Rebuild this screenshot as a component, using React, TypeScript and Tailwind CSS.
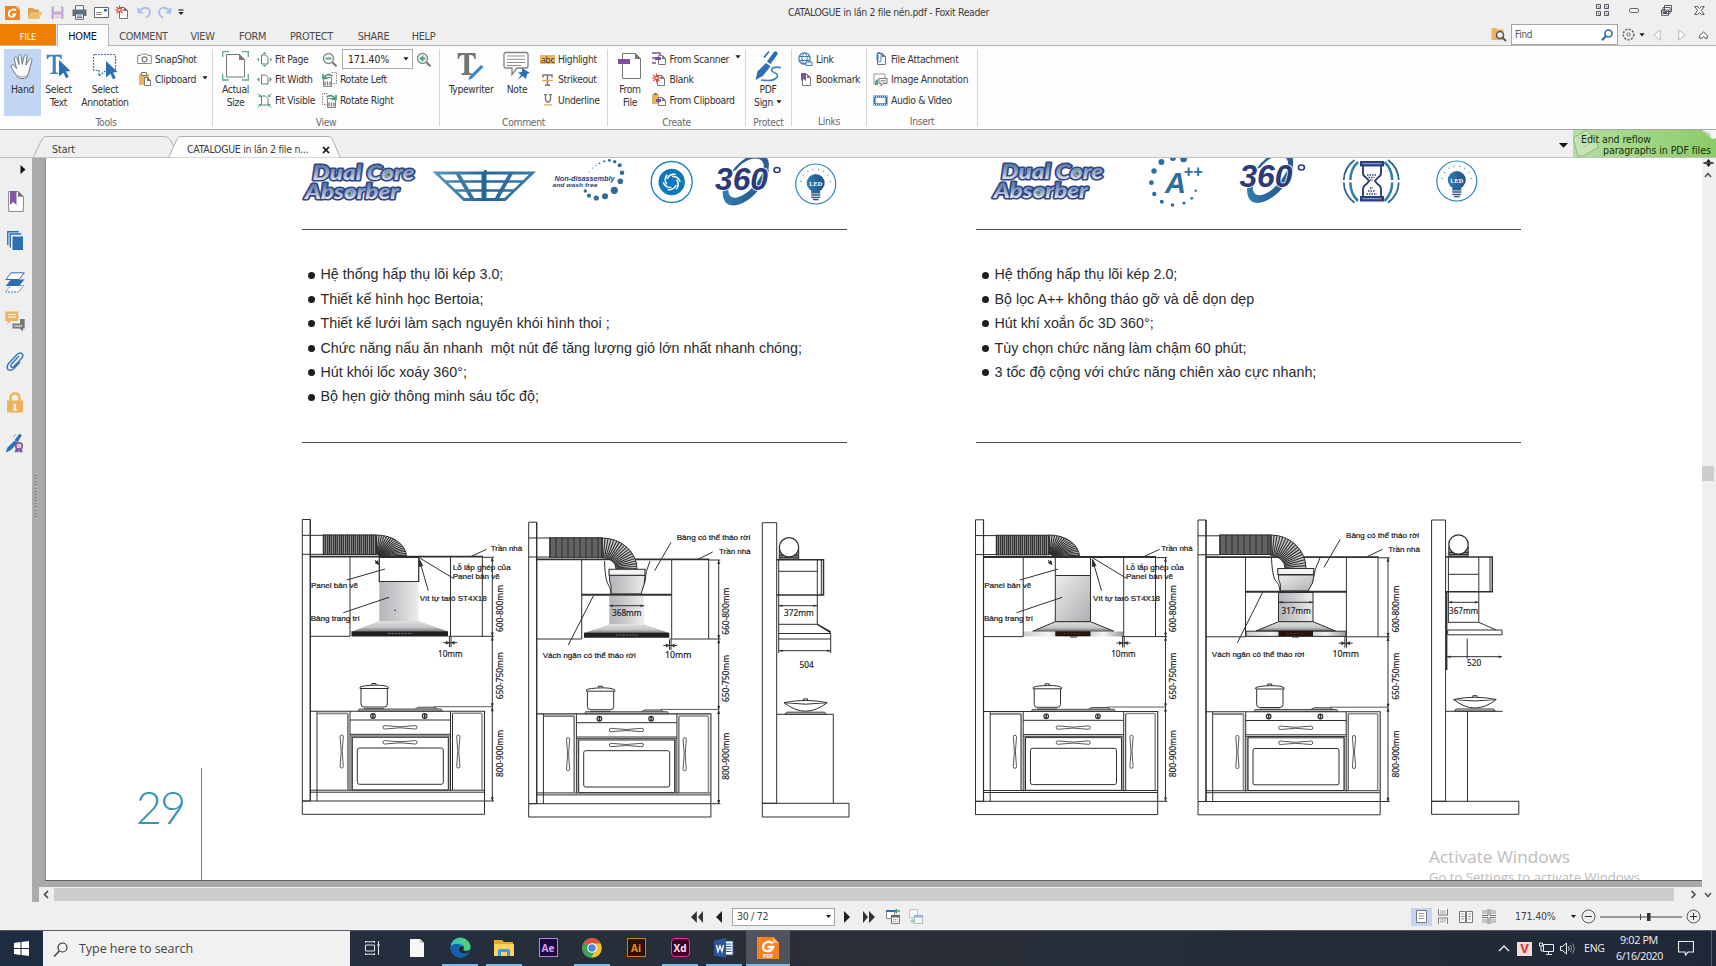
import React from 'react';

const INK = '#2f2f31';
const UI = "font-['DejaVu_Sans_Condensed','Noto_Sans',sans-serif]";

/* ---------- small shared pieces ---------- */

function Caret({ className = '' }: { className?: string }) {
  return (
    <svg width="6" height="4" viewBox="0 0 7 4" className={`shrink-0 ${className}`}>
      <path d="M0.5 0h6L3.5 3.8z" fill="#1a1a1a" />
    </svg>
  );
}

function Svg({ w, h, children, className = '' }: { w: number; h: number; children: React.ReactNode; className?: string }) {
  return (
    <svg width={w} height={h} viewBox={`0 0 ${w} ${h}`} fill="none" className={`shrink-0 ${className}`}>
      {children}
    </svg>
  );
}

const Sheet = ({ x = 0, y = 0, w = 9, h = 12 }: { x?: number; y?: number; w?: number; h?: number }) => (
  <g transform={`translate(${x} ${y})`}>
    <path d={`M.5 .5H${w - 3.5}L${w - 0.5} 3.5V${h - 0.5}H.5z`} fill="#fff" stroke="#777" />
    <path d={`M${w - 4} 0v4h4z`} fill="#777" />
  </g>
);

const Burst = ({ x, y }: { x: number; y: number }) => (
  <g transform={`translate(${x} ${y})`} stroke="#d4452e" strokeWidth="1.1">
    <path d="M0-4.5V4.5M-4.5 0H4.5M-3-3L3 3M-3 3L3-3" />
    <circle r="1.1" fill="#fff" stroke="none" />
  </g>
);

/* ---------- title bar ---------- */

function TitleBar() {
  return (
    <div className="flex h-6 shrink-0 items-center bg-[#efefef] pt-px">
      <div className="flex w-[190px] items-center pl-[5px]">
        <Svg w={15} h={16}>
          <path d="M0 1h11l4 4v10H0z" fill="#f5821f" />
          <path d="M11 1h4v4z" fill="#fbc9a0" />
          <path d="M11.3 5.2C8.500 3.600 3.800 5 3.700 9c0 3.200 4.800 4.200 6.400.3L7.300 9.500" stroke="#fff" strokeWidth="1.800" />
        </Svg>
        <Svg w={16} h={14} className="ml-[7px]">
          <path d="M1 2h5l1.500 1.500H12V6H4L1 12z" fill="#d9a24e" />
          <path d="M4 6h11.500L12 13H1z" fill="#f0bd6d" />
        </Svg>
        <Svg w={13} h={14} className="ml-[8px]">
          <path d="M.5.500h12v12.500H.5z" fill="#c7a9d3" />
          <path d="M3 .5h7v5H3z" fill="#efefef" />
          <path d="M3 8.500h7V13H3z" fill="#efefef" />
          <path d="M4 10h5M4 11.500h5" stroke="#c7a9d3" strokeWidth=".7" />
        </Svg>
        <Svg w={15} h={15} className="ml-[8px]">
          <path d="M3.500 5V.7h8V5" stroke="#666" fill="#fff" />
          <path d="M.5 4.500h14V11H.5z" fill="#6d6d6d" />
          <path d="M3 6.500h9v1.500H3z" fill="#3b78b8" />
          <path d="M3.500 9h8v5.300h-8z" fill="#fff" stroke="#666" />
          <path d="M5 11h5M5 12.500h5" stroke="#3b78b8" />
        </Svg>
        <Svg w={15} h={11} className="ml-[7px]">
          <path d="M.5.500h14v10H.5z" fill="#fff" stroke="#666" />
          <path d="M2 5.500h6M2 7.500h6" stroke="#888" />
          <path d="M10 2h3v2.500h-3z" fill="#2f6fb5" />
        </Svg>
        <Svg w={14} h={15} className="ml-[6px]">
          <Sheet x={4} y={2} w={9} h={12} />
          <Burst x={4.5} y={5} />
        </Svg>
        <Svg w={15} h={14} className="ml-[8px]">
          <path d="M1 6.500h5M1.500 2v4.500M2 6.500C4 1.500 9.500.500 12 3.500c3 4-1 7-3 8.500" stroke="#a9c3e2" strokeWidth="1.900" />
        </Svg>
        <Svg w={15} h={14} className="ml-[5px]">
          <path d="M14 6.500H9M13.500 2v4.500M13 6.500C11 1.500 5.500.500 3 3.500c-3 4 1 7 3 8.500" stroke="#a9c3e2" strokeWidth="1.900" />
        </Svg>
        <Svg w={6} h={7} className="ml-[6px]">
          <path d="M.5 1h5" stroke="#222" strokeWidth="1.200" />
          <path d="M.3 3h5.400L3 6z" fill="#222" />
        </Svg>
      </div>
      <div className={`flex-1 pl-[598px] text-[10.400px] tracking-[-0.340px] text-[#3c3c3c] ${UI}`}>CATALOGUE in lần 2 file nén.pdf - Foxit Reader</div>
      <div className="flex items-center pb-[5px] pr-[11px]">
        <Svg w={13} h={13}>
          {[0.5, 8.5].map((x) => [0.5, 7.500].map((y) => <path key={`${x}${y}`} d={`M${x} ${y}h4v4h-4zM${x + 1.500} ${y + 1.500}l1.500 1.500`} stroke="#555563" />))}
        </Svg>
        <Svg w={10} h={5} className="ml-[20px]"><rect x=".6" y=".6" width="8.800" height="3.800" rx="1" fill="#fff" stroke="#555563" /></Svg>
        <Svg w={11} h={11} className="ml-[22px]">
          <path d="M3.500.500h7v6h-7zM2 2.500h7v6H2zM.5 5h7v5.300h-7z" fill="#fff" stroke="#555563" />
          <path d="M2 7.500h4" stroke="#555563" />
        </Svg>
        <Svg w={11} h={9} className="ml-[22px]">
          <path d="M.7.600h3l1.800 2 1.800-2h3L7.300 4.500l3 3.900h-3L5.500 6.400 3.700 8.400h-3l3-3.900z" fill="#fff" stroke="#555563" />
        </Svg>
      </div>
    </div>
  );
}

/* ---------- ribbon tabs ---------- */

const MENU: [string, string][] = [
  ['COMMENT', 'w-[69px]'],
  ['VIEW', 'w-[49px]'],
  ['FORM', 'w-[51px]'],
  ['PROTECT', 'w-[67px]'],
  ['SHARE', 'w-[57px]'],
  ['HELP', 'w-[43px]'],
];

function MenuRow() {
  return (
    <div className={`relative flex h-[22px] shrink-0 items-stretch border-b border-[#b8b8b8] bg-[#efefef] text-[10.800px] leading-[25px] tracking-[-0.280px] text-[#4a4a4a] ${UI}`}>
      <div className="w-14 bg-[#f08000] text-center text-[9.500px] text-white">FILE</div>
      <div className="-mb-px ml-px w-[52px] border-x border-t border-[#b8b8b8] bg-[#fdfdfd] text-center leading-[23px] text-[#111]"><span className="relative -left-[0.500px]">HOME</span></div>
      {MENU.map(([t, w]) => (
        <div key={t} className={`text-center ${w}`}>{t}</div>
      ))}
      <div className="ml-auto flex items-center pr-[8px]">
        <Svg w={16} h={15} className="mr-[4px]">
          <path d="M.5 1h5l1 1.500h6V13H.5z" fill="#ebb45f" />
          <circle cx="9" cy="8" r="3.500" stroke="#555" strokeWidth="1.500" fill="#efefef" />
          <path d="M11.500 10.500l3.500 3.500" stroke="#555" strokeWidth="1.800" />
        </Svg>
        <div className="flex h-[21px] w-[107px] items-center justify-between border border-[#a5a5a5] bg-white pl-[3px] pr-[4px] text-[10px] text-[#555]">
          <span>Find</span>
          <Svg w={12} h={12}>
            <circle cx="7.500" cy="4.500" r="3.500" stroke="#2f6fb5" strokeWidth="1.700" />
            <path d="M5 7l-4 4.300" stroke="#2f6fb5" strokeWidth="2.200" />
          </Svg>
        </div>
        <Svg w={13} h={13} className="ml-[4px]">
          <circle cx="6.500" cy="6.500" r="5.300" stroke="#666" strokeWidth="1.500" strokeDasharray="2.200 1.300" />
          <circle cx="6.500" cy="6.500" r="1.600" stroke="#666" />
        </Svg>
        <Caret className="ml-[4px]" />
        <Svg w={8} h={12} className="ml-[8px]"><path d="M7.200 1v10L.8 6z" fill="#fff" stroke="#b9b9b9" /></Svg>
        <Svg w={8} h={12} className="ml-[17px]"><path d="M.8 1v10l6.400-5z" fill="#fff" stroke="#b9b9b9" /></Svg>
        <Svg w={9} h={8} className="ml-[13px]"><path d="M.7 4.500l3.800-3.500 3.800 3.500v2.700H6L4.500 5.500 3 7.200H.7z" fill="#fff" stroke="#555563" /></Svg>
      </div>
    </div>
  );
}

/* ---------- ribbon ---------- */

function Group({ label, w, children }: { label: string; w: string; children: React.ReactNode }) {
  return (
    <div className={`flex h-full shrink-0 py-[3px] ${w}`}>
      <div className="flex flex-1 flex-col">
        <div className="flex flex-1">{children}</div>
        <div className="h-[11px] text-center leading-[12px] text-[#6a6a6a]">{label}</div>
      </div>
      <div className="w-px bg-[#d4d4d4]" />
    </div>
  );
}

function Big({ icon, lines, w, active = false }: { icon: React.ReactNode; lines: React.ReactNode[]; w: string; active?: boolean }) {
  return (
    <div className={`flex h-[67px] shrink-0 flex-col items-center ${w} ${active ? 'bg-[#c2d5f2]' : ''}`}>
      <div className="flex h-[34px] items-center justify-center">{icon}</div>
      {lines.map((l, i) => (
        <div key={i} className="flex h-[12.400px] items-center whitespace-nowrap leading-3">{l}</div>
      ))}
    </div>
  );
}

function Row({ icon, text, caret = false, gap = 'gap-[3px]' }: { icon: React.ReactNode; text: string; caret?: boolean; gap?: string }) {
  return (
    <div className={`flex h-[20.600px] items-center whitespace-nowrap ${gap}`}>
      <span className="flex w-[15px] shrink-0 justify-center">{icon}</span>
      <span>{text}</span>
      {caret && <Caret className="mb-1 ml-[3px]" />}
    </div>
  );
}

const Pointer = ({ x, y }: { x: number; y: number }) => (
  <path transform={`translate(${x} ${y})`} d="M0 0l11.500 11-4.500.5 2.800 5.500-2.800 1.300-2.600-5.600L0 16.500z" fill="#2c6db3" />
);

const HandIcon = () => (
  <Svg w={25} h={27}>
    <path d="M7.500 24C5 20 2.500 17 1.300 14c-.8-2.300 1.500-3 2.700-1.500l2.500 3L4.300 6C4 3.500 6.300 3 7 5.200l2 6.300-.5-8C8.500 1 11 1 11.300 3.300l.9 8L14.300 3c.6-2 2.900-1.500 2.600.7l-1 8.300 3.500-5.500c1.200-1.700 3-.8 2.400 1-1 3.500-1.700 7.500-3 11.500-.6 2.300-1.500 3.700-1.800 5.500-3 1.800-7 1.500-9.500-.5z" fill="#fafafa" stroke="#6f7680" />
    <path d="M8 22.500c3 2 6.500 2 9 .3" stroke="#9a9fa8" />
  </Svg>
);
const SelTextIcon = () => (
  <Svg w={25} h={27}>
    <path d="M.7 6V1.800h15V6h-1.200c-.3-1.700-1-2.500-3-2.500H9.800v14.800c0 1.200.6 1.500 2.500 1.600V21H4.200v-1.100c2 0 2.500-.4 2.500-1.600V3.500H5C3 3.500 2.300 4.300 2 6z" fill="#4281bb" />
    <Pointer x={13} y={7} />
  </Svg>
);
const SelAnnIcon = () => (
  <Svg w={26} h={27}>
    <path d="M3 1.500h19q1.500 0 1.500 1.500v13q0 1-1.500 1.500h-8l-7 5.500v-5.500H3q-1.500 0-1.500-1.500V3q0-1.500 1.500-1.500z" stroke="#2c6db3" strokeDasharray="1.800 1.200" strokeWidth="1.200" />
    <Pointer x={14} y={8} />
  </Svg>
);
const ActualIcon = () => (
  <Svg w={27} h={30}>
    <path d="M.7 6V.7H7M20 .7h6.300V6M.7 23v6H7M20 29h6.300v-6" stroke="#5fae8f" strokeWidth="1.300" />
    <path d="M4.500 3.500h13l5 5V26h-18z" fill="#fff" stroke="#777" />
    <path d="M17 3v6h6z" fill="#777" />
  </Svg>
);
const TypeIcon = () => (
  <Svg w={28} h={30}>
    <path d="M.7 8V2h18v6h-1.300c-.4-2.600-1.500-4-4-4h-1.300v16.300c0 1.600.7 2 2.800 2.200V24H4.400v-1.500c2.200-.2 2.900-.6 2.900-2.200V4H6C3.500 4 2.400 5.400 2 8z" fill="#757575" />
    <path d="M24 14l2.500 2L15 27.500l-3.500 1.500 1-3.500z" fill="#3f83c6" />
  </Svg>
);
const NoteIcon = () => (
  <Svg w={28} h={30}>
    <path d="M3 1.500h20q2 0 2 2V15q0 2-2 2H14L9 23.500V17H3q-2 0-2-2V3.500q0-2 2-2z" fill="#fff" stroke="#808080" strokeWidth="1.300" />
    <path d="M4 5h18M4 8.300h18M4 11.500h18M4 14.500h14" stroke="#8b8b8b" />
    <path d="M19 17l8 5-3 1-1 5-3.500-3-5 4 3.500-5-3-2.500 4-.5z" fill="#2c6db3" />
  </Svg>
);
const FromFileIcon = () => (
  <Svg w={24} h={28}>
    <path d="M4.500 1.500h13l5 5v20h-18z" fill="#fff" stroke="#777" />
    <path d="M17 1v6h6z" fill="#777" />
    <path d="M0 7h12v5H0z" fill="#7f4f9e" />
  </Svg>
);
const SignIcon = () => (
  <Svg w={27} h={31}>
    <path d="M12 10.500L19 1q1.500-1.500 3 0 1.200 1.300.2 2.700L15.500 13z" fill="#2c6db3" />
    <path d="M11 12l4.500 3.200-7.500 9.500L.5 29l2-8.500z" fill="#2c6db3" />
    <path d="M9 6.500l5-6" stroke="#2c6db3" strokeWidth="1.700" />
    <path d="M26 17c-5-2-11 0-9 3 2 2.500 7 2 5 6-2 3.500-9 4-16 3" stroke="#3f83c6" strokeWidth="1.600" />
  </Svg>
);
const FitIcon = ({ kind }: { kind: number }) => (
  <Svg w={15} h={15}>
    <path d="M4.500 3h4l2.500 2.500V12H4.500z" fill="#fff" stroke="#777" />
    {kind === 0 && <path d="M7.500 0l2 2h-4zM7.500 15l2-2h-4zM0 7.500l2-2v4zM15 7.500l-2-2v4z" fill="#4aa986" />}
    {kind === 1 && <path d="M0 7.500l2.500-2.500v5zM15 7.500L12.500 5v5z" fill="#4aa986" />}
    {kind === 2 && <path d="M.5.500l3 3m0-2v2h-2M14.500.500l-3 3m0-2v2h2M.5 14.500l3-3m0 2v-2h-2M14.500 14.500l-3-3m0 2v-2h2" stroke="#4aa986" />}
  </Svg>
);
const Mag = ({ plus = false, className = '' }: { plus?: boolean; className?: string }) => (
  <Svg w={16} h={15} className={className}>
    <circle cx="6.500" cy="6.500" r="5" fill="#fff" stroke="#888" strokeWidth="1.300" />
    <path d="M10.500 10.500l4 3.800" stroke="#777" strokeWidth="2" />
    <path d={plus ? 'M3.500 6.500h6M6.500 3.500v6' : 'M3.500 6.500h6'} stroke="#3f9f7c" strokeWidth="1.800" />
  </Svg>
);
const RotIcon = ({ right = false }: { right?: boolean }) => (
  <Svg w={15} h={15}>
    <g transform={right ? 'translate(15 0) scale(-1 1)' : undefined}>
      <path d="M9.500.500h5v11h-5" stroke="#888" strokeDasharray="1.500 1" />
      <path d="M1.500 5.500h8v9h-8z" fill="#fff" stroke="#888" />
      <path d="M3 9.500v4M5.500 9.500v4M8 9.500v4" stroke="#777" strokeWidth="1.300" />
      <path d="M1 2v4.500h4.500M2 6C3.500 2.500 7 1.500 10.500 4" stroke="#3f9f7c" strokeWidth="1.700" />
    </g>
  </Svg>
);

function Ribbon() {
  return (
    <div className={`flex h-[84px] shrink-0 border-b border-[#a6a6a6] bg-[#fdfdfd] text-[10.300px] tracking-[-0.350px] text-[#333] ${UI}`}>
      <Group label="Tools" w="w-[213px]">
        <Big w="ml-[4px] w-[37px]" active icon={<HandIcon />} lines={['Hand']} />
        <Big w="w-[35px]" icon={<SelTextIcon />} lines={['Select', 'Text']} />
        <Big w="w-[58px]" icon={<SelAnnIcon />} lines={['Select', 'Annotation']} />
        <div className="ml-[3px]">
          <Row icon={<Svg w={15} h={12}><path d="M.7 2.500h3l1-1.500h5l1 1.500h3.600v8H.7z" fill="#fff" stroke="#888" /><circle cx="7.500" cy="6.300" r="2.500" stroke="#777" strokeWidth="1.200" /></Svg>} text="SnapShot" />
          <Row caret icon={<Svg w={14} h={15}><path d="M1 2h10v11H1z" fill="#e9b25c" /><path d="M3.500.500h5v3h-5z" fill="#fff" stroke="#777" /><Sheet x={6} y={5} w={7} h={9} /></Svg>} text="Clipboard" />
        </div>
      </Group>
      <Group label="View" w="w-[227px]">
        <Big w="ml-px w-[43px]" icon={<ActualIcon />} lines={['Actual', 'Size']} />
        <div className="w-[65px]">
          <Row icon={<FitIcon kind={0} />} text="Fit Page" />
          <Row icon={<FitIcon kind={1} />} text="Fit Width" />
          <Row icon={<FitIcon kind={2} />} text="Fit Visible" />
        </div>
        <div>
          <div className="flex h-[20.600px] items-center">
            <Mag />
            <div className="ml-[4px] flex h-5 w-[71px] items-center justify-between border border-[#ababab] bg-white pl-[5px] pr-[3px] text-[#222]">
              <span className="tracking-[0px]">171.40%</span>
              <Caret />
            </div>
            <Mag plus className="ml-[3px]" />
          </div>
          <Row icon={<RotIcon />} text="Rotate Left" />
          <Row icon={<RotIcon right />} text="Rotate Right" />
        </div>
      </Group>
      <Group label="Comment" w="w-[168px]">
        <Big w="ml-[7px] w-[48px]" icon={<TypeIcon />} lines={['Typewriter']} />
        <Big w="w-[44px]" icon={<NoteIcon />} lines={['Note']} />
        <div className="ml-px">
          <Row icon={<span className="bg-[#efb55f] px-px font-sans text-[9px] leading-[9px] tracking-[-0.500px] text-[#444]">abc</span>} text="Highlight" />
          <Row icon={<Svg w={11} h={12}><path d="M1 3.500V1h9v2.500M5.500 1v10M3 11.300h5" stroke="#777" strokeWidth="1.500" /><path d="M0 6.500h11" stroke="#e9a44b" strokeWidth="1.500" /></Svg>} text="Strikeout" />
          <Row icon={<Svg w={10} h={12}><path d="M2.500 0v5q0 3 2.500 3t2.500-3V0M1 .5h3M6 .5h3" stroke="#777" strokeWidth="1.300" /><path d="M1 10.800h8" stroke="#e9a44b" strokeWidth="1.200" /></Svg>} text="Underline" />
        </div>
      </Group>
      <Group label="Create" w="w-[138px]">
        <Big w="ml-px w-[42px]" icon={<FromFileIcon />} lines={['From', 'File']} />
        <div className="ml-[0.500px]">
          <Row caret icon={<Svg w={15} h={14}><path d="M0 1h8v3M0 6h4M0 11h4" stroke="#7f4f9e" strokeWidth="1.400" /><Sheet x={6} y={3} w={8} h={10} /><path d="M3 5h6v3H3z" fill="#7f4f9e" /></Svg>} text="From Scanner" />
          <Row icon={<Svg w={15} h={14}><Sheet x={5} y={2} w={8} h={11} /><Burst x={4.500} y={5} /></Svg>} text="Blank" />
          <Row icon={<Svg w={15} h={14}><path d="M0 1h7v10H0z" fill="#e9b25c" /><path d="M2 0h3v2H2z" fill="#777" /><Sheet x={6} y={4} w={8} h={9} /><path d="M4 6h5v3H4z" fill="#7f4f9e" /></Svg>} text="From Clipboard" />
        </div>
      </Group>
      <Group label="Protect" w="w-[46px]">
        <Big w="w-[44px]" icon={<SignIcon />} lines={['PDF', <span key="s" className="flex items-center gap-[3px]">Sign <Caret /></span>]} />
      </Group>
      <Group label="Links" w="w-[75px]">
        <div className="ml-[6px]">
          <Row icon={<Svg w={15} h={14}><circle cx="6.500" cy="6.500" r="5.700" stroke="#3b78b8" strokeWidth="1.200" /><path d="M6.500 1c-3.500 3-3.500 8 0 11M6.500 1c3.500 3 3.500 8 0 11M1 4.500h11M1 8.500h11" stroke="#3b78b8" /><path d="M8 10h6v3.500H8z" fill="#fff" stroke="#3b78b8" /></Svg>} text="Link" />
          <Row icon={<Svg w={12} h={14}><Sheet x={2} y={1} w={9} h={12} /><path d="M1 0h5v8L3.500 6 1 8z" fill="#7f4f9e" /></Svg>} text="Bookmark" />
        </div>
      </Group>
      <Group label="Insert" w="w-[111px]">
        <div className="ml-[6px]">
          <Row icon={<Svg w={12} h={14}><Sheet x={2} y={1} w={9} h={12} /><path d="M3 3v5.500q0 1.500 1.500 1.500T6 8.500V2Q6 .5 4 .5T2 2v6" stroke="#3b78b8" /></Svg>} text="File Attachment" />
          <Row icon={<Svg w={15} h={14}><path d="M1 12V1h11v4" stroke="#999" /><path d="M2 8l3-2v6H2z" fill="#4aa986" /><path d="M6 5.500h8v5h-4l-2 2.500v-2.500H6z" fill="#fff" stroke="#777" /><path d="M7.500 7.500h5M7.500 9h5" stroke="#888" strokeWidth=".8" /></Svg>} text="Image Annotation" />
          <Row icon={<Svg w={15} h={11}><path d="M.5.500h14v10H.5z" fill="#2c6db3" /><path d="M2.500 2.700h10v5.600h-10z" fill="#fff" /><path d="M1 1.600h13M1 9.500h13" stroke="#fff" strokeWidth=".8" strokeDasharray="1 1" /></Svg>} text="Audio & Video" />
        </div>
      </Group>
    </div>
  );
}

/* ---------- document tabs ---------- */

function DocTabs() {
  return (
    <div className={`relative flex h-[28px] shrink-0 items-stretch border-b border-[#c2c2c2] bg-[#efefef] text-[10.500px] tracking-[-0.300px] text-[#3c3c3c] ${UI}`}>
      <svg width="345" height="28" viewBox="0 130 345 28" className="absolute left-0 top-0">
        <path d="M33 158L42 139Q43.500 136.500 46 136.500H164Q168 136.500 170 139.500L174 147" fill="none" stroke="#b0b0b0" />
        <path d="M168.500 158L177 139Q178.500 136.500 181 136.500H328Q331 136.500 332 138.500L340.500 158z" fill="#fdfdfd" stroke="#b0b0b0" />
      </svg>
      <div className="relative w-[187px] pl-[52px] pt-[12px] leading-[15px] tracking-[0px]">Start</div>
      <div className="relative w-[135px] whitespace-nowrap pt-[12px] leading-[15px]">CATALOGUE in lần 2 file n...</div>
      <svg width="8" height="8" viewBox="0 0 8 8" className="relative mt-[16px]"><path d="M1 1l6 6M7 1L1 7" stroke="#111" strokeWidth="1.700" /></svg>
      <div className="ml-auto flex">
        <svg width="9" height="5" viewBox="0 0 9 5" className="mr-[5px] mt-[13px]"><path d="M0 0h9L4.500 4.800z" fill="#111" /></svg>
        <div className="relative w-[143px] overflow-hidden bg-gradient-to-r from-[#b5dfa0] to-[#8bcb68] text-[10.500px] leading-[11px] tracking-[-0.070px] text-[#16300f]">
          <svg width="143" height="27" viewBox="0 0 143 27" className="absolute inset-0">
            <path d="M0 8L14 0l12 17-16 9H5z" fill="#c6e3b4" stroke="#8fb87a" />
            <path d="M5 9l9-5M8 13l9-5M10 17l9-5" stroke="#a9cf92" />
            <path d="M129 0h14v8l-4 1z" fill="#f4f7f2" />
            <path d="M129 0l10 9-2-6z" fill="#c8d3c2" />
          </svg>
          <div className="relative pl-[8px] pt-[4px]">Edit and reflow</div>
          <div className="relative whitespace-nowrap pl-[30px]">paragraphs in PDF files</div>
        </div>
      </div>
    </div>
  );
}

/* ---------- left navigation ---------- */

function SideBar() {
  return (
    <div className="flex w-8 shrink-0 flex-col items-center bg-[#efefef] pr-[2px]">
      <Svg w={6} h={9} className="ml-[15px] mt-[7px]"><path d="M.5 0l5 4.500-5 4.500z" fill="#111" /></Svg>
      <Svg w={16} h={21} className="ml-[1px] mt-[17px]">
        <path d="M.6.600h10l4.800 4.800v15H.6z" fill="#fff" stroke="#888" />
        <path d="M10 .3v5.400h5.500z" fill="#777" />
        <path d="M2 0h6.500v14L5.200 11 2 14z" fill="#8558a5" />
      </Svg>
      <Svg w={17} h={20} className="ml-[1px] mt-[19px]">
        <path d="M.8 14V.800h11M3.300 16.500V3h11" stroke="#2c6db3" strokeWidth="1.400" />
        <path d="M5.500 5.500H16V19H5.500z" fill="#2c6db3" />
      </Svg>
      <Svg w={20} h={21} className="mt-[21px]">
        <path d="M6 13.500h13l-5.500 6.500H.7z" fill="#fff" stroke="#3b78b8" strokeDasharray="2 1" />
        <path d="M6 7.500h13.500L14 14H.7z" fill="#2c6db3" />
        <path d="M6 .8h13.300L14 7.500H.9z" fill="#fff" stroke="#2c6db3" />
      </Svg>
      <Svg w={20} h={21} className="mt-[18px]">
        <path d="M.3.500h13v9.500H6L2.500 13v-3H.3z" fill="#ebb45f" />
        <path d="M3 3.500h8M3 6h8" stroke="#fff" />
        <path d="M15 8h4.700v9.500H18V20.500l-3.500-3H7.500v-5H15z" fill="#777" />
        <path d="M9 15h8" stroke="#fff" />
      </Svg>
      <Svg w={18} h={20} className="mt-[20px]">
        <path d="M13 4L6 11.500q-2 2.500-.5 3.500 1.500.8 3-1L15 7q3-3.500 1-5.300T11 2.500L3 11q-3 4-1 6.500 2.500 2 6-1l6-6.500" stroke="#3b78b8" strokeWidth="1.500" />
      </Svg>
      <Svg w={16} h={21} className="mt-[20px]">
        <path d="M3.500 9V6q0-4.500 4.500-4.500T12.500 6v3" stroke="#ebb45f" strokeWidth="2.500" />
        <path d="M0 8.500h16V20.500H0z" fill="#ebb45f" />
        <path d="M8 12v6M6.300 13H8M6.300 17.700h3.400" stroke="#fff" strokeWidth="1.600" />
      </Svg>
      <Svg w={18} h={21} className="mt-[19px]">
        <path d="M9 8l4.500-6 2 1.300L11.500 10zM8.500 9l3 2L4.500 18 0 20l1.800-4.500zM7 5.500L10 2" fill="#2c6db3" stroke="#2c6db3" strokeWidth=".6" />
        <path d="M10 16l-1.500 4.500 2.500-.500 1 1 1-2.500 1 2.500 1-1 2 .5-1.500-4.500z" fill="#8558a5" />
        <circle cx="13" cy="14" r="3.200" fill="#fff" stroke="#8558a5" strokeWidth="1.800" />
        <circle cx="13" cy="14" r="1.700" fill="#ebb45f" />
      </Svg>
    </div>
  );
}

/* ---------- feature logos ---------- */

type TP = { x: number; y: number; w?: number; size?: number; children: string };

function DualCore({ dx = 0, dy = 0 }: { dx?: number; dy?: number }) {
  const t = {
    fontFamily: 'Lato, "Liberation Sans", sans-serif',
    fontWeight: 900,
    fontStyle: 'italic',
    fill: 'url(#chrome)',
    stroke: '#34467f',
    strokeWidth: 3.2,
    strokeLinejoin: 'round' as const,
    paintOrder: 'stroke',
    lengthAdjust: 'spacingAndGlyphs' as const,
  };
  return (
    <g transform={`translate(${dx} ${dy})`}>
      <text {...t} x="305" y="199" fontSize="20.500" textLength="94">Absorber</text>
      <text {...t} x="312.500" y="180.300" fontSize="21.500" textLength="102">Dual Core</text>
      <circle cx="388.500" cy="174.500" r="2.600" fill="#5b8470" stroke="#c9dcea" strokeWidth=".8" />
      <circle cx="349.500" cy="193.500" r="2.600" fill="#5b8470" stroke="#c9dcea" strokeWidth=".8" />
    </g>
  );
}

function Spin360({ dx = 0, dy = 0 }: { dx?: number; dy?: number }) {
  return (
    <g transform={`translate(${dx} ${dy})`}>
      <path d="M733 171C741 160 752 154 761 155.500C767 157 769.500 163 767.500 170" fill="none" stroke="#2d6a9c" strokeWidth="1.200" />
      <path d="M736 170C744 160 753 157 759 159C764 161 764.500 166 763 171L768 168C770.500 161 766 153.500 758 154C748 155 739 162 733 171z" fill="#2c5d93" />
      <path d="M723 189C721.500 199 725.500 205.500 734 205.500C748 204 764 188 769 170L764 170C758 184 747 195 737 197.500C731 198.500 728 195 728.500 189z" fill="url(#sea)" />
      <text x="715" y="189.500" fontFamily='"Liberation Sans", sans-serif' fontWeight="700" fontStyle="italic" fontSize="31" textLength="53" lengthAdjust="spacingAndGlyphs" fill="#2b3a78" stroke="#fff" strokeWidth="1.600" paintOrder="stroke">360</text>
      <ellipse cx="777" cy="170" rx="3" ry="2.500" fill="none" stroke="#2b3a78" strokeWidth="1.500" />
    </g>
  );
}

function Led({ cx, cy }: { cx: number; cy: number }) {
  return (
    <g transform={`translate(${cx} ${cy})`}>
      <circle r="20" fill="none" stroke="#2a84bd" strokeWidth="1.200" />
      <circle cy="-1" r="9" fill="url(#sea)" />
      <path d="M-4.500 6.500h9v3h-9z" fill="#2c6496" />
      <path d="M-4.500 11h9M-4.500 13.300h9M-3 15.500h6" stroke="#34507f" strokeWidth="1.300" />
      {[-80, -55, -32, -11, 11, 32, 55, 80].map((a) => (
        <path key={a} d="M0-15.800v2" transform={`rotate(${a})`} stroke="#66a3c9" strokeWidth=".9" />
      ))}
      <text y="1.500" textAnchor="middle" fontSize="6.300" fontWeight="700" fontFamily='"Liberation Serif", serif' fill="#fff">LED</text>
    </g>
  );
}

function LogoDefs() {
  return (
    <defs>
      <linearGradient id="chrome" x1="0" y1="0" x2="0" y2="1">
        <stop offset="0.250" stopColor="#5a7dae" />
        <stop offset="0.600" stopColor="#a3b4d6" />
        <stop offset="0.850" stopColor="#eef1f8" />
      </linearGradient>
      <linearGradient id="sea" x1="0" y1="0" x2="1" y2="0">
        <stop offset="0" stopColor="#2f7fae" />
        <stop offset="1" stopColor="#274f8a" />
      </linearGradient>
      <linearGradient id="net" gradientUnits="userSpaceOnUse" x1="433" y1="0" x2="535" y2="0">
        <stop offset="0" stopColor="#5d9abf" />
        <stop offset="0.500" stopColor="#256593" />
        <stop offset="1" stopColor="#3b7cab" />
      </linearGradient>
    </defs>
  );
}

const DOTS_A = [[589, 172, 0.5], [592.5, 168, 0.6], [596, 165.600, 0.7], [599.500, 163.300, 0.9], [604.300, 161.300, 1.1], [609.300, 160.400, 1.4], [614.700, 161.700, 1.7], [619.700, 165.300, 2], [622, 172.700, 2.300], [620.300, 181.300, 2.800], [614.300, 190.300, 3.600], [605, 196.300, 3], [596.300, 198, 2.600], [589, 195.700, 2.100], [585.300, 191, 1.700]];
const DOTS_B = [[1183.600, 159, 3.300], [1172.900, 158, 3], [1161.400, 162, 3], [1154, 171, 2.700], [1151.400, 182.700, 2.400], [1154.300, 194, 2.200], [1161.800, 201.700, 2], [1172.500, 205, 1.800], [1184, 203, 1.600], [1191.800, 198.300, 1.400], [1195.700, 190.700, 1.200]];

const ITAL = { fontFamily: '"Liberation Sans", sans-serif', fontStyle: 'italic', fontWeight: 700, fill: '#2b3f7a', lengthAdjust: 'spacingAndGlyphs' as const };

function LogosA() {
  return (
    <svg width="545" height="71" viewBox="302 158 545 71" className="block">
      <LogoDefs />
      <DualCore />
      <g stroke="url(#net)" fill="none">
        <path d="M436 173h96.500L505 199.500H464z" strokeWidth="2.800" />
        <path d="M446 181.500h77M454.500 190.500h60" strokeWidth="2.300" />
        <path d="M457 172.500l16 27.500M511.500 172.500L496 200" strokeWidth="3.800" />
        <path d="M484 172.500h.01V200" strokeWidth="5" />
      </g>
      {DOTS_A.map(([x, y, r], i) => <circle key={i} cx={x} cy={y} r={r} fill="#2f6c9b" />)}
      <text {...ITAL} x="554.500" y="181" fontSize="8" textLength="60">Non-disassembly</text>
      <text {...ITAL} x="552.500" y="186.700" fontSize="6" textLength="45">and wash free</text>
      <circle cx="671.700" cy="182" r="20.500" fill="none" stroke="#1c80bd" strokeWidth="1.300" />
      <circle cx="671.700" cy="182" r="13.200" fill="#0c78b7" />
      {[0, 60, 120, 180, 240, 300].map((a) => (
        <path key={a} transform={`translate(671.700 182) rotate(${a})`} d="M-4.500-3Q-2-8.500 4-7.500" stroke="#fff" strokeWidth="1.500" fill="none" />
      ))}
      <Spin360 />
      <Led cx={815.700} cy={184} />
    </svg>
  );
}

function LogosB() {
  return (
    <svg width="545" height="71" viewBox="976 158 545 71" className="block">
      <DualCore dx={688.700} dy={-1} />
      {DOTS_B.map(([x, y, r], i) => <circle key={i} cx={x} cy={y} r={r} fill="#2f6c9b" />)}
      <text {...ITAL} x="1165" y="192.500" fontSize="29" textLength="21" fill="#2c6f9f">A</text>
      <text {...ITAL} x="1183.500" y="177" fontSize="17" textLength="19" fill="#2c6f9f">++</text>
      <Spin360 dx={524.400} dy={-2.500} />
      <g fill="none">
        <path d="M1354.500 160Q1344 168 1343.800 180M1343.800 182.500Q1344 195 1354.500 202.700M1388 160Q1398.500 168 1398.700 180M1398.700 182.500Q1398.500 195 1388 202.700" stroke="#2b5f93" strokeWidth="1.700" />
        <path d="M1358 162Q1350.500 169 1350.300 180M1350.300 182.500Q1350.500 194 1358 201M1384.500 162Q1392 169 1392.200 180M1392.200 182.500Q1392 194 1384.500 201" stroke="#3180aa" strokeWidth="2.600" />
        <path d="M1360 161h24v5.500h-24zM1360 196h24v5.500h-24z" fill="#2b3f7a" />
        <path d="M1362.500 163.700h19M1362.500 198.700h19" stroke="#9fb2d2" strokeWidth="1" />
        <path d="M1363 166v7q0 3 3.500 5l2.500 3-2.500 3q-3.500 2-3.500 5v7M1381 166v7q0 3-3.500 5l-2.500 3 2.500 3q3.500 2 3.500 5v7" stroke="#2b3f7a" strokeWidth="1.900" />
        <path d="M1367 175h9M1368.500 177.500h6M1370 180h3M1370 188h3M1368 191h7.500M1366.500 194h10.500" stroke="#2b3f7a" strokeWidth="1.700" strokeDasharray="1.500 1" />
      </g>
      <Led cx={1456.800} cy={181} />
    </svg>
  );
}

/* ---------- installation drawings ---------- */

function Arial({ x, y, w, size = 8, children }: TP) {
  return <text x={x} y={y} fontSize={size} textLength={w} lengthAdjust="spacingAndGlyphs" fontFamily='"Liberation Sans", sans-serif' fill="#222224" stroke="#222224" strokeWidth=".220">{children}</text>;
}

function Dim({ x, y, w, size = 8.800, children }: TP) {
  return <text x={x} y={y} fontSize={size} textLength={w} lengthAdjust="spacingAndGlyphs" fontFamily='"Noto Sans", "Open Sans", sans-serif' fill="#222224" stroke="#222224" strokeWidth=".180">{children}</text>;
}

function VDim({ x, y, children }: { x: number; y: number; children: string }) {
  return (
    <text transform={`translate(${x} ${y}) rotate(-90)`} fontSize="8.600" textLength="47" lengthAdjust="spacingAndGlyphs" fontFamily='"Noto Sans", "Open Sans", sans-serif' fill="#222224" stroke="#222224" strokeWidth=".180">{children}</text>
  );
}

function HArrow({ x1, x2, y }: { x1: number; x2: number; y: number }) {
  return (
    <g>
      <path d={`M${x1} ${y}H${x2}`} />
      <path d={`M${x1} ${y}l3.500-1.300v2.600zM${x2} ${y}l-3.500-1.300v2.600z`} fill={INK} stroke="none" />
    </g>
  );
}

type KitchenProps = { dx?: number; dy?: number; first?: string; left?: number; right?: number; mark?: number };

/* Wall, ceiling line, lower cabinets, hob, pot and the height scale. */
function Kitchen({ dx = 0, dy = 0, first = '600-800mm', left = 350, right = 450.500, mark = 450.200 }: KitchenProps) {
  const tips = [557.300, 636.500, 707.300, 801.200];
  return (
    <g transform={`translate(${dx} ${dy})`}>
      <path d="M302.300 519.500h8V801h-8zM302.300 801H484.500v13.300H302.300z" />
      <path d="M310.300 519.500V801" strokeWidth="1.200" />
      <path d="M310 556.700H483" strokeWidth="1.800" />
      <path d={`M${left} 557v79.300M${right} 557v79.300M482.300 557v79.300M310 636.300H${left}M${right - 2} 636.300H494`} />
      {/* wall pipe */}
      <path d="M302.300 535.300H324M302.300 554.300H324" />
      {/* counter and cabinets */}
      <path d="M310 711.200H484.500V801" strokeWidth="1.100" />
      <path d="M317 711v90M310 790.200H484M310 792.200H484M317 713.700H348V790M350 711v80M450.500 711v80M350 720H450.500M350 734.300H450.500M350 736H450.500" />
      <path d="M347.700 713.500V790M482 713.500V790M317.500 713.300H348M452.500 713.300H482M448.800 736v54M351.800 736v54" stroke="#8a8a8c" strokeWidth="1.500" />
      <path d="M452.500 713.500V790M352.300 737.300H448.300V790H352.300z" />
      <rect x="357.300" y="748" width="86" height="36.300" rx="2" />
      {[727.300, 742.300].map((y) => (
        <path key={y} d={`M384.500 ${y - 1.700}L400 ${y - 0.500}L415.500 ${y - 1.700}q1.500 0 1.500 1.700t-1.500 1.700L400 ${y + 0.500}L384.500 ${y + 1.700}q-1.500 0-1.500-1.700t1.500-1.700z`} strokeWidth=".8" />
      ))}
      {[341.700, 458.300].map((x) => (
        <path key={x} d={`M${x - 1.600} 736.500L${x - 0.500} 751.500L${x - 1.600} 766.500q0 1.500 1.600 1.500t1.600-1.500L${x + 0.500} 751.500L${x + 1.600} 736.500q0-1.500-1.600-1.500t-1.600 1.500z`} strokeWidth=".8" />
      ))}
      {[373, 424.700].map((x) => (
        <g key={x}>
          <circle cx={x} cy="716" r="2.300" fill="#fff" strokeWidth="1.200" />
          <path d={`M${x} 713.500v5`} strokeWidth="1.500" />
        </g>
      ))}
      {/* hob and pot */}
      <path d="M358.300 711l1-2H441l1.300 2zM364 708.700h20M415.500 708.700l3-1.500H434l3 1.500M434 706.700H492.300" fill="#b9b9b9" strokeWidth=".8" />
      <path d="M361 688.700V704q0 3 3 3h20.300q3 0 3-3V688.700" fill="#fff" />
      <path d="M360 688.500v-1.300q3-1.700 14-2t14.400 2v1.300zM372 685v-1.500h4V685" fill="#fff" />
      {/* clearance marker */}
      <g transform={`translate(${mark} 642.700)`}>
        <path d="M-7 0h14M-.8-6v10.500M.8-6v10.500" />
        <path d="M-.8 0l-3.500-2v4zM.8 0l3.500-2v4z" fill={INK} stroke="none" />
      </g>
      {/* heights */}
      <path d="M492.300 557.300V801M483 557.300h11M485 801h9" />
      {tips.map((y, i) => (
        <g key={y} fill={INK} stroke="none">
          {i < 3 && <path d={`M492.300 ${y}l-1.500 4h3z`} />}
          {i > 0 && <path d={`M492.300 ${y}l-1.500-4h3z`} />}
        </g>
      ))}
      <VDim x={503} y={632}>{first}</VDim>
      <VDim x={503} y={699.300}>650-750mm</VDim>
      <VDim x={503} y={777}>800-900mm</VDim>
    </g>
  );
}

/* Ribbed flexible pipe: straight run followed by an elbow fan. */
function Hose({ x, y, run, cy, irx, iry, orx, ory }: { x: number; y: number; run: number; cy: number; irx: number; iry: number; orx: number; ory: number }) {
  const ribs = Array.from({ length: Math.floor(run / 2) + 1 }, (_, i) => x + i * 2);
  const n = 19;
  const cx = x + run;
  const fan = Array.from({ length: n }, (_, i) => {
    const a = Math.PI / 2 - (i / (n - 1)) * (Math.PI / 2);
    return [cx + irx * Math.cos(a), cy - iry * Math.sin(a), cx + orx * Math.cos(a), cy - ory * Math.sin(a)];
  });
  return (
    <g>
      <path d={`M${x} ${y}h${run}v19.500h-${run}z`} fill="#8e8e90" />
      <path d={`M${cx} ${cy - ory}A${orx} ${ory} 0 0 1 ${cx + orx} ${cy}H${cx + irx}A${irx} ${iry} 0 0 0 ${cx} ${cy - iry}z`} fill="#c9c9cb" strokeWidth="1" />
      {ribs.map((r, i) => <path key={r} d={`M${r} ${y - 0.500}v20.500`} strokeWidth={i % 3 ? 0.900 : 1.500} />)}
      {fan.map(([a, b, c, d], i) => <path key={i} d={`M${a} ${b}L${c} ${d}`} strokeWidth="1.100" />)}
    </g>
  );
}

function DrawingDefs() {
  return (
    <defs>
      <linearGradient id="steel" x1="0" y1="0" x2="1" y2="0">
        <stop offset="0" stopColor="#b4b5b8" />
        <stop offset="0.450" stopColor="#c9cacc" />
        <stop offset="1" stopColor="#ededee" />
      </linearGradient>
      <linearGradient id="steel2" x1="0" y1="0" x2="1" y2="1">
        <stop offset="0" stopColor="#ececed" />
        <stop offset="1" stopColor="#aeafb2" />
      </linearGradient>
      <linearGradient id="skirt" x1="0" y1="0" x2="0" y2="1">
        <stop offset="0" stopColor="#dededf" />
        <stop offset="0.600" stopColor="#c5c6c8" />
        <stop offset="1" stopColor="#77787b" />
      </linearGradient>
      <linearGradient id="band" x1="0" y1="0" x2="1" y2="0">
        <stop offset="0" stopColor="#c9c9cb" />
        <stop offset="0.250" stopColor="#f5f5f5" />
        <stop offset="0.500" stopColor="#a5a6a9" />
        <stop offset="0.800" stopColor="#f3f3f3" />
        <stop offset="1" stopColor="#98999c" />
      </linearGradient>
    </defs>
  );
}

function FrontCallouts({ dx = 0, tx = 490.700 }: { dx?: number; tx?: number }) {
  return (
    <g transform={`translate(${dx} 0)`}>
      <path d="M346.700 580L385 569M343.300 612.700L389 597.300M419 557.500L453.300 578.300M428.300 590.700L420 562M486.500 549.300L471 556.500" />
      <path d="M419.300 559.500l3.300 6-3.500 1zM378.500 564.500l-3.300-1.800 2.500-2zM375 560l2 3" fill={INK} />
      <Arial x={311} y={588} w={47}>Panel bản vẽ</Arial>
      <Arial x={310.700} y={621} w={49}>Bảng trang trí</Arial>
      <Arial x={452.700} y={569.500} w={58}>Lỗ lắp ghép của</Arial>
      <Arial x={452.700} y={579.200} w={47}>Panel bản vẽ</Arial>
      <Arial x={419.700} y={601} w={67}>Vít tự tarô ST4X18</Arial>
      <Arial x={tx} y={550.800} w={31.500}>Trần nhà</Arial>
      <Dim x={438} y={656.500} w={24.500}>10mm</Dim>
    </g>
  );
}

/* Side elevation with a wok on the counter. */
function Wok({ cx, y, half }: { cx: number; y: number; half: number }) {
  return (
    <g>
      <path d={`M${cx - half + 1} ${y + 11.500}l1.500-2h${2 * half - 5}l1.500 2z`} />
      <path d={`M${cx - half} ${y}Q${cx - half / 2} ${y + 8.500} ${cx} ${y + 8.500}T${cx + half} ${y}Q${cx} ${y + 3} ${cx - half} ${y}z`} fill="#fff" />
      <path d={`M${cx - half} ${y}Q${cx} ${y - 4.500} ${cx + half} ${y}M${cx - 2} ${y - 2.300}v-1.500h4v1.500`} fill="#fff" />
    </g>
  );
}

function Pipe({ cx, cy }: { cx: number; cy: number }) {
  return (
    <g>
      <path d={`M${cx - 9.700} ${cy + 2}v10h19.400v-10`} fill="#8d8d90" />
      <path d={`M${cx - 9.700} ${cy + 8}h19.400M${cx - 9.700} ${cy + 10}h19.400`} />
      <circle cx={cx} cy={cy} r="9.700" fill="#fff" strokeWidth="1.300" />
    </g>
  );
}

function DrawingsA() {
  return (
    <svg width="560" height="320" viewBox="302 505 560 320" fill="none" stroke={INK} strokeWidth="1" className="block overflow-visible">
      <DrawingDefs />
      <Hose x={323.500} y={535} run={53} cy={557} irx={3} iry={3} orx={30} ory={22} />
      <path d="M379.300 557.500H418.700V581.700H379.300z" fill="#fff" strokeWidth="1.200" />
      <path d="M379.300 582H418.700V621H379.300z" fill="url(#steel)" stroke="none" />
      <path d="M379.300 621H418.700L448 631.500H352z" fill="url(#skirt)" stroke="none" />
      <path d="M351.500 631.300h96.500v5.200h-96.500z" fill="#231f20" stroke="none" />
      <path d="M388 633.500h24" stroke="#8a8a8a" strokeWidth=".8" strokeDasharray="2 1.300" />
      <circle cx="395" cy="610.300" r=".4" />
      <Kitchen />
      <FrontCallouts />

      <Kitchen dx={226.400} dy={2.700} first="660-800mm" left={355.300} right={445.300} mark={443.900} />
      <path d="M604.500 561Q605 576 607 582Q611 588 611 594M650 561Q645 572 645 582Q643 588 638.500 594" />
      <Hose x={550} y={537.800} run={52} cy={569} irx={14} iry={11.500} orx={35} ory={31} />
      <path d="M609.500 575.500H645Q645 584 641 594H611Q612 586 609.500 580z" fill="url(#steel)" />
      <path d="M609 569.300h36v6h-36z" fill="#f3f3f3" strokeWidth="1.100" />
      <path d="M609.300 596H644.300V624.500H609.300z" fill="url(#steel)" stroke="none" />
      <path d="M609.300 624.500H644.300L669.300 633H584z" fill="url(#skirt)" stroke="none" />
      <path d="M584 632.700h85.300v5H584z" fill="#231f20" stroke="none" />
      <path d="M616 635h22" stroke="#8a8a8a" strokeWidth=".8" strokeDasharray="2 1.300" />
      <path d="M581.700 594.700H671.700" strokeWidth="1.900" />
      <HArrow x1={609.500} x2={644} y={605.700} />
      <path d="M568.300 645L593.300 596M671 542.300L654.700 570.700M712.700 552L698 559.300" />
      <Dim x={612} y={616.300} w={29.500}>368mm</Dim>
      <Arial x={542.700} y={658.300} w={93}>Vách ngăn có thể tháo rời</Arial>
      <Dim x={665} y={658} w={26.300}>10mm</Dim>
      <Arial x={676.700} y={540.300} w={73.500}>Bảng có thể tháo rời</Arial>
      <Arial x={719} y={553.700} w={31.700}>Trần nhà</Arial>

      <path d="M762.300 522.700h14.400V803.300h-14.400zM762.300 803.300H849v13.700h-86.700z" />
      <Pipe cx={789} cy={547.300} />
      <path d="M776.700 559.800H823.500V595H776.700" strokeWidth="1.500" />
      <path d="M821.300 560v35M817.300 560v64.300M778.700 560v93M778.700 571.300h38.600M778.700 624.300h38.600L830.700 633v20M778.700 633.500h52M778.700 639h52" />
      <path d="M817.300 624.300L830.700 632" strokeWidth="1.500" />
      <HArrow x1={779} x2={817} y={605.700} />
      <HArrow x1={779} x2={830.700} y={650.700} />
      <Dim x={784} y={616.300} w={29.700}>372mm</Dim>
      <Dim x={799.500} y={668} w={14.200}>504</Dim>
      <Wok cx={805.600} y={702.700} half={21.500} />
      <path d="M776.700 714.300h56.600v89" />
    </svg>
  );
}

function DrawingsB() {
  return (
    <svg width="560" height="320" viewBox="976 505 560 320" fill="none" stroke={INK} strokeWidth="1" className="block overflow-visible">
      <Hose x={996.500} y={535.300} run={53} cy={557} irx={3} iry={3} orx={30} ory={22} />
      <path d="M1055.300 557.500H1090.500V575.500H1055.300z" fill="#fff" />
      <path d="M1055.300 575.500H1090.500V621.700H1055.300z" fill="url(#steel2)" />
      <path d="M1055.300 621.700H1090.500L1114 631.300H1032.500z" fill="url(#skirt)" />
      <path d="M1023.300 631.500h100v5h-100z" fill="url(#band)" stroke="none" />
      <path d="M1055.300 631.300h35.200v5h-35.200z" fill="#241314" stroke="none" />
      <path d="M1064 633.700h18" stroke="#7d2f2c" strokeWidth="1" strokeDasharray="1.500 2" />
      <path d="M1070 637h7" />
      <Kitchen dx={673.200} dy={0.300} />
      <FrontCallouts dx={673.200} tx={488} />

      <Kitchen dx={895.700} dy={0.500} left={349.800} right={450.700} mark={450} />
      <path d="M1271.500 558Q1272 572 1274.500 579Q1280 584 1280 591M1320 558Q1314 570 1313 580Q1311 586 1307.500 591" />
      <Hose x={1220} y={535} run={51} cy={568.500} irx={14} iry={13} orx={35} ory={33.500} />
      <path d="M1278.500 575H1314Q1314 583 1308 591H1280.500Q1281 583 1278.500 579z" fill="url(#steel2)" />
      <path d="M1277.800 568.500h36v6h-36z" fill="#f3f3f3" strokeWidth="1.100" />
      <path d="M1278.500 592.500H1313V621.700H1278.500z" fill="url(#steel)" />
      <path d="M1278.500 621.700H1313L1335.500 631H1256z" fill="url(#skirt)" />
      <path d="M1246 631.200h100v5.200h-100z" fill="url(#band)" />
      <path d="M1278.500 631h34.500v5h-34.500z" fill="#241314" stroke="none" />
      <path d="M1287 633.500h18" stroke="#7d2f2c" strokeWidth="1" strokeDasharray="1.500 2" />
      <path d="M1292 637h7" />
      <path d="M1245.500 591.700H1346.500" strokeWidth="1.900" />
      <HArrow x1={1279} x2={1313} y={602.300} />
      <path d="M1237.400 642.700L1262.700 592.300M1340.300 539.300L1324 567.300M1382.400 549.300L1367.400 556.500" />
      <Dim x={1281.500} y={613.500} w={29.300}>317mm</Dim>
      <Arial x={1211.800} y={656.700} w={92.600}>Vách ngăn có thể tháo rời</Arial>
      <Dim x={1332.500} y={656.500} w={26.300}>10mm</Dim>
      <Arial x={1346} y={537.500} w={73}>Bảng có thể tháo rời</Arial>
      <Arial x={1388.200} y={551.700} w={31.800}>Trần nhà</Arial>

      <path d="M1431.600 520h14V801.300h-14zM1431.600 801.300h87.200v13h-87.200z" />
      <Pipe cx={1458.500} cy={544.500} />
      <path d="M1445.600 557H1492.300V591.700H1445.600" strokeWidth="1.500" />
      <path d="M1490 557v34M1478.800 557v65M1448.400 557v65M1448.400 574.300h30.400M1447.700 622.300h31.100L1496.200 630M1447.700 630h54.300v4.800h-54.300zM1467.200 638.500v20" />
      <path d="M1446.700 592v78" strokeWidth="1.400" />
      <HArrow x1={1448.700} x2={1478.500} y={602.300} />
      <HArrow x1={1447} x2={1502} y={656.700} />
      <Dim x={1449} y={613.500} w={29.200}>367mm</Dim>
      <Dim x={1467} y={666.300} w={14.200}>520</Dim>
      <Wok cx={1474.900} y={699.500} half={21.300} />
      <path d="M1445.600 711.300h57M1467.500 711.300v90" />
    </svg>
  );
}

/* ---------- document page ---------- */

function FeatureList({ items }: { items: string[] }) {
  return (
    <ul className="h-[212px] pl-[6px] pt-[33px] font-['Liberation_Sans',sans-serif] text-[14.300px] text-[#2b2b2d]">
      {items.map((t) => (
        <li key={t} className="flex h-[24.400px] items-center whitespace-pre">
          <span className="mr-[5.500px] size-[7px] rounded-full bg-[#1f1f22]" />
          {t}
        </li>
      ))}
    </ul>
  );
}

function PageColumn({ logos, items, drawings }: { logos: React.ReactNode; items: string[]; drawings: React.ReactNode }) {
  return (
    <div className="w-[545px] shrink-0">
      {logos}
      <div className="h-px bg-[#4d4d4f]" />
      <FeatureList items={items} />
      <div className="h-px bg-[#4d4d4f]" />
      <div className="pt-[62px]">{drawings}</div>
    </div>
  );
}

function DocPage() {
  return (
    <div className="relative flex h-[722px] overflow-hidden border-l border-[#8c8c8c] bg-white">
      <div className="flex w-[256px] shrink-0 items-end">
        <div className="flex h-[112px] w-[156px] items-start justify-end border-r-[1.500px] border-[#3f95b8] pr-[17px] pt-[14px] font-['Lato',sans-serif] text-[45px] font-light leading-[50px] tracking-[-2px] text-[#3792b8]">29</div>
      </div>
      <PageColumn
        logos={<LogosA />}
        items={[
          'Hệ thống hấp thụ lõi kép 3.0;',
          'Thiết kế hình học Bertoia;',
          'Thiết kế lưới làm sạch nguyên khói hình thoi ;',
          'Chức năng nấu ăn nhanh  một nút để tăng lượng gió lớn nhất nhanh chóng;',
          'Hút khói lốc xoáy 360°;',
          'Bộ hẹn giờ thông minh sáu tốc độ;',
        ]}
        drawings={<DrawingsA />}
      />
      <div className="w-[129px] shrink-0" />
      <PageColumn
        logos={<LogosB />}
        items={[
          'Hệ thống hấp thụ lõi kép 2.0;',
          'Bộ lọc A++ không tháo gỡ và dễ dọn dẹp',
          'Hút khí xoắn ốc 3D 360°;',
          'Tùy chọn chức năng làm chậm 60 phút;',
          '3 tốc độ cộng với chức năng chiên xào cực nhanh;',
        ]}
        drawings={<DrawingsB />}
      />
      <div className="absolute left-[1383px] top-[687px] whitespace-nowrap font-['Open_Sans',sans-serif] text-[#bcbcbc]">
        <div className="text-[17.200px] leading-[24px]">Activate Windows</div>
        <div className="text-[13.100px] leading-[17px]">Go to Settings to activate Windows.</div>
      </div>
    </div>
  );
}

function Viewer() {
  return (
    <div className="flex h-[744px] shrink-0">
      <SideBar />
      <div className="flex min-w-0 flex-1">
        <div className="flex w-[7px] shrink-0 flex-col items-center justify-center bg-[#ababab] pb-[68px]">
          <div className="flex h-[42px] w-[3px] flex-col justify-between">
            {Array.from({ length: 14 }, (_, i) => <div key={i} className="h-px bg-[#8a8a8a]" />)}
          </div>
        </div>
        <div className="flex min-w-0 flex-1 flex-col">
          <div className="h-[729px] bg-[#a9a9a9] pl-[6px]">
            <DocPage />
            <div className="h-px bg-[#5f5f5f]" />
          </div>
          <div className="flex h-[15px] items-center bg-[#efefef]">
            <svg width="15" height="9" viewBox="0 0 15 9"><path d="M9 1L5.500 4.500 9 8" stroke="#444" strokeWidth="1.600" fill="none" /></svg>
            <div className="h-[13px] flex-1 bg-[#cdcdcd]" />
            <svg width="28" height="9" viewBox="0 0 28 9"><path d="M17.500 1L21 4.500 17.500 8" stroke="#444" strokeWidth="1.600" fill="none" /></svg>
          </div>
        </div>
      </div>
      <div className="flex w-[14px] shrink-0 flex-col items-center bg-[#efefef] pr-[2px]">
        <Svg w={11} h={8} className="mt-px"><path d="M.5 4h10" stroke="#111" strokeWidth="1.500" /><path d="M5.500 0l2.200 3H3.300zM5.500 8l2.200-3H3.300z" fill="#111" /></Svg>
        <Svg w={8} h={6} className="mt-[5px]"><path d="M1 5l3-3.500L7 5" stroke="#555" strokeWidth="1.600" /></Svg>
        <div className="mt-[288px] h-[15px] w-[12px] bg-[#cdcdcd]" />
        <Svg w={8} h={6} className="mt-auto mb-[4px]"><path d="M1 1l3 3.500L7 1" stroke="#555" strokeWidth="1.600" /></Svg>
      </div>
    </div>
  );
}

/* ---------- status bar ---------- */

function StatusBar() {
  return (
    <div className={`flex h-[28px] shrink-0 items-center bg-[#efefef] pt-px text-[10.500px] text-[#444] ${UI}`}>
      <div className="flex items-center pl-[691px]">
        <Svg w={12} h={12}><path d="M6 0v12L0 6zM12 0v12L7 6z" fill="#333" /><path d="M6.300 0v12" stroke="#efefef" /></Svg>
        <Svg w={7} h={12} className="ml-[13px]"><path d="M6 0v12L0 6z" fill="#222" /></Svg>
        <div className="ml-[9px] flex h-[18px] w-[103px] items-center justify-between border border-[#a5a5a5] bg-white pl-[4px] pr-[3px] tracking-[-0.300px]">
          30 / 72 <svg width="5" height="3" viewBox="0 0 7 4"><path d="M0 0h7L3.500 4z" fill="#111" /></svg>
        </div>
        <Svg w={7} h={12} className="ml-[8px]"><path d="M1 0v12l6-6z" fill="#222" /></Svg>
        <Svg w={12} h={12} className="ml-[13px]"><path d="M0 0v12l5-6zM6 0v12l6-6z" fill="#333" /></Svg>
        <Svg w={15} h={15} className="ml-[11px]"><path d="M.5 1.500h8v8h-8z" fill="#fff" stroke="#888" /><path d="M0 1h9v2H0z" fill="#2c6db3" /><path d="M5.500 6.500h8v8h-8z" fill="#fff" stroke="#777" /><path d="M5 6h9v2.500H5z" fill="#666" /><path d="M7 10.500h6M7 12.500h6" stroke="#888" strokeDasharray="1 1" /><path d="M14 2h-5m2-2L9 2l2 2" stroke="#3f9f7c" strokeWidth="1.300" /></Svg>
        <Svg w={15} h={15} className="ml-[8px] opacity-45"><path d="M.5.500h8v8h-8z" fill="#fff" stroke="#888" /><path d="M5.500 6.500h8v8h-8z" fill="#fff" stroke="#777" /><path d="M5 6h9v2.500H5z" fill="#2c6db3" /><path d="M1 12h4m-2-2l2 2-2 2" stroke="#3f9f7c" strokeWidth="1.300" /></Svg>
      </div>
      <div className="ml-auto flex items-center pr-[15px]">
        <div className="flex h-[18px] w-[21px] items-center justify-center bg-[#c2d5f2]">
          <Svg w={11} h={13}><path d="M.5.500h10v12H.5z" fill="#fff" stroke="#777" /><path d="M2.500 3.500h6M2.500 6h6M2.500 8.500h6" stroke="#999" /></Svg>
        </div>
        <Svg w={10} h={15} className="ml-[6px]"><path d="M.5 0v6h9V0M.5 15V9h9v6" fill="#fff" stroke="#777" /><path d="M2 2h6M2 4h6M2 11h6M2 13h6" stroke="#999" /></Svg>
        <Svg w={14} h={12} className="ml-[11px]"><path d="M.5 .5h6v11h-6zM7.500.500h6v11h-6z" fill="#fff" stroke="#777" /><path d="M2 3h3M2 5.500h3M2 8h3M9 3h3M9 5.500h3M9 8h3" stroke="#999" /></Svg>
        <Svg w={14} h={15} className="ml-[9px]"><path d="M0 6.500h6V0M8 0v6.500h6M0 8.500h6V15M8 15V8.500h6" stroke="#777" /><path d="M0 2h5M0 4h5M9 2h5M9 4h5M0 11h5M0 13h5M9 11h5M9 13h5" stroke="#999" /></Svg>
        <span className="ml-[19px] w-[56px] tracking-[-0.200px]">171.40%</span>
        <svg width="5" height="3" viewBox="0 0 7 4"><path d="M0 0h7L3.500 4z" fill="#111" /></svg>
        <Svg w={15} h={15} className="ml-[5px]"><circle cx="7.500" cy="7.500" r="6.500" stroke="#555" /><path d="M4 7.500h7" stroke="#333" /></Svg>
        <Svg w={82} h={10} className="ml-[4px]"><path d="M0 5h82M40.500 2v6" stroke="#444" /><path d="M47 1h3.500v8H47z" fill="#333" /></Svg>
        <Svg w={15} h={15} className="ml-[4px]"><circle cx="7.500" cy="7.500" r="6.500" stroke="#555" /><path d="M4 7.500h7M7.500 4v7" stroke="#333" /></Svg>
      </div>
    </div>
  );
}

/* ---------- Windows taskbar ---------- */

function Task({ children, open = false, active = false }: { children: React.ReactNode; open?: boolean; active?: boolean }) {
  return (
    <div className={`flex h-full w-[44px] shrink-0 flex-col items-center ${active ? 'bg-[#50545d]' : ''}`}>
      <div className="flex flex-1 items-center">{children}</div>
      <div className={`h-[2px] ${active ? 'w-full' : 'w-[36px]'} ${open ? 'bg-[#76b9ed]' : ''}`} />
    </div>
  );
}

function Adobe({ text, bg, fg, round = false }: { text: string; bg: string; fg: string; round?: boolean }) {
  return (
    <div className={`flex h-[19px] w-[19px] items-center justify-center border-[1.500px] font-['Open_Sans',sans-serif] text-[10px] font-bold leading-none ${bg} ${fg} ${round ? 'rounded-[4px]' : ''}`}>{text}</div>
  );
}

function TaskBar() {
  return (
    <div className="flex h-[36px] shrink-0 items-stretch border-t border-[#565c69] bg-gradient-to-r from-[#1e2c40] via-[#2a2f38] to-[#1f2838] font-['Open_Sans',sans-serif]">
      <div className="flex w-[43px] items-center justify-center">
        <Svg w={15} h={15}><path d="M0 2l6.500-1v6H0zM7.500.900L15 0v7H7.500zM0 8h6.500v6L0 13zM7.500 8H15v7l-7.500-1z" fill="#fff" /></Svg>
      </div>
      <div className="flex w-[307px] items-center bg-[#f1f1f1] pl-[10px] pt-px text-[12.500px] tracking-[-0.050px] text-[#444]">
        <Svg w={15} h={15} className="mr-[11px]"><circle cx="9.500" cy="5.500" r="4.500" stroke="#333" strokeWidth="1.200" /><path d="M6.300 9L1 14.500" stroke="#333" strokeWidth="1.300" /></Svg>
        Type here to search
      </div>
      <Task><Svg w={15} h={14}><path d="M0 .5h2M8 .5h2M0 13.500h2M8 13.500h2M.5 0v2M9.500 0v2M.5 14v-2M9.500 14v-2M.5 4h9v6h-9zM2 .8h6M2 13.200h6M13.500 0v14M12 4h3" stroke="#e8e8e8" /></Svg></Task>
      <Task><Svg w={14} h={18} className="ml-[2px]"><path d="M0 0h10l4 4v14H0z" fill="#f6f6f4" /><path d="M10 0v4h4z" fill="#c9c9c6" /></Svg></Task>
      <Task open>
        <Svg w={21} h={21}>
          <circle cx="10.500" cy="10.500" r="10" fill="#1b8fd6" />
          <path d="M1 8C3 1 11-1 16 2.500c4.500 3 5.500 8 3.500 10.500-1.500 1.800-5 1.500-6.500.500 2-2 1-6-3-6.500C6 6.500 2.500 8 1 13z" fill="#3fc8a0" />
          <path d="M12 2c5 0 9 5 7.500 10.500-1.500 2-5 1.500-6 .5 3-3 0-8-4-7z" fill="#5bd45f" opacity=".7" />
          <path d="M.5 10C3 5.500 9.500 6 10.500 9.500 7 10 7 16 13 16.500c2.500.300 4.500-.500 6-1.500-3 6-10 7-14.500 3.500C1.500 16 .3 13 .5 10z" fill="#1560ad" />
          <path d="M10.500 9.500c-3 1-2.500 6 2.500 7 2.500.300 4.500-.500 6-1.500.6-.8 1-1.500 1.300-2.600-2 1.600-5.800 1.600-7.300.600 1-1 1-2.500.3-4z" fill="#252d39" />
        </Svg>
      </Task>
      <Task open>
        <Svg w={20} h={17}><path d="M0 1h8l2 2h9v4H0z" fill="#e5a92c" /><path d="M0 5h20v12H0z" fill="#fad25f" /><path d="M4 17v-5q0-2 2-2h8q2 0 2 2v5h-3v-4H7v4z" fill="#3e98dc" /></Svg>
      </Task>
      <Task><Adobe text="Ae" bg="bg-[#1f0740] border-[#a98ae8]" fg="text-[#c9a5ff]" /></Task>
      <Task open>
        <Svg w={20} h={20}>
          <circle cx="10" cy="10" r="9.800" fill="#f2c12e" />
          <path d="M10 10L1.500 5A9.800 9.800 0 0 1 18.800 5.500H10z" fill="#dd4f3e" />
          <path d="M1.500 5A9.800 9.800 0 0 0 9 19.700L13.500 12.500 10 10z" fill="#3aa655" />
          <circle cx="10" cy="10" r="4.800" fill="#fff" />
          <circle cx="10" cy="10" r="3.700" fill="#4a86e8" />
        </Svg>
      </Task>
      <Task><Adobe text="Ai" bg="bg-[#2a1203] border-[#e07a10]" fg="text-[#f58a18]" /></Task>
      <Task open><Adobe round text="Xd" bg="bg-[#3a0326] border-[#e52fb8]" fg="text-[#ffe0f7]" /></Task>
      <Task open>
        <Svg w={20} h={20}><path d="M10 3h9v14h-9z" fill="#fff" stroke="#2b579a" /><path d="M12 6h5.500M12 8.500h5.500M12 11h5.500M12 13.500h5.500" stroke="#2b579a" /><path d="M0 2.500L12 0v20L0 17.500z" fill="#2b579a" /><path d="M2.500 7l1.500 6.500L6 8l2 5.500L9.500 7" stroke="#fff" strokeWidth="1.300" /></Svg>
      </Task>
      <Task open active>
        <Svg w={22} h={22}><path d="M0 0h16l6 6v16H0z" fill="#f5821f" /><path d="M16 0v6h6z" fill="#fbb67a" /><path d="M16 6.500C12 3 6 5.500 6 10c0 5 8 6 10 0h-5.500" stroke="#fff" strokeWidth="2.400" /><text x="11" y="20.500" fontSize="5.500" fontWeight="700" textAnchor="middle" fill="#fff" fontFamily="Open Sans">PDF</text></Svg>
      </Task>
      <div className="ml-auto flex items-center text-[11px] text-[#f2f2f2]">
        <Svg w={12} h={7}><path d="M1 6l5-5 5 5" stroke="#eee" strokeWidth="1.300" /></Svg>
        <div className="ml-[7px] flex h-[14px] w-[15px] items-center justify-center bg-[#f7dada] font-['Liberation_Sans',sans-serif] text-[13px] font-bold leading-none text-[#d5312e]">V</div>
        <Svg w={15} h={13} className="ml-[7px]"><path d="M4.500 2.500h10v7h-10zM7 12.500h6M9.500 10v2.500M.5 1h3v3h-3zM2 4v5h2" stroke="#eee" /></Svg>
        <Svg w={15} h={13} className="ml-[6px]"><path d="M.5 4.500h2l4-3.500v11l-4-3.500h-2z" stroke="#eee" /><path d="M8.500 4.500q1.500 2 0 4" stroke="#eee" /><path d="M10.500 3q2.500 3.500 0 7M12.500 1.500q3.500 5 0 10" stroke="#8b909a" /></Svg>
        <span className="ml-[9px] w-[32px] text-[10.500px] tracking-[-0.200px]">ENG</span>
        <div className="w-[46px] pb-[2px] text-center leading-[16px] tracking-[-0.350px]">
          <div className="whitespace-nowrap text-[10.800px]">9:02 PM</div>
          <div className="text-[10.600px]">6/16/2020</div>
        </div>
        <Svg w={16} h={15} className="ml-[16px]"><path d="M.5.500h15v10.500H10L7.500 14 7 11H.5z" stroke="#eee" strokeWidth="1.200" /></Svg>
        <div className="ml-[17px] mr-[4px] h-[35px] w-px bg-[#565c69]" />
      </div>
    </div>
  );
}

export default function App() {
  return (
    <div className="flex h-[966px] w-[1716px] flex-col overflow-hidden bg-[#efefef]">
      <TitleBar />
      <MenuRow />
      <Ribbon />
      <DocTabs />
      <Viewer />
      <StatusBar />
      <TaskBar />
    </div>
  );
}
